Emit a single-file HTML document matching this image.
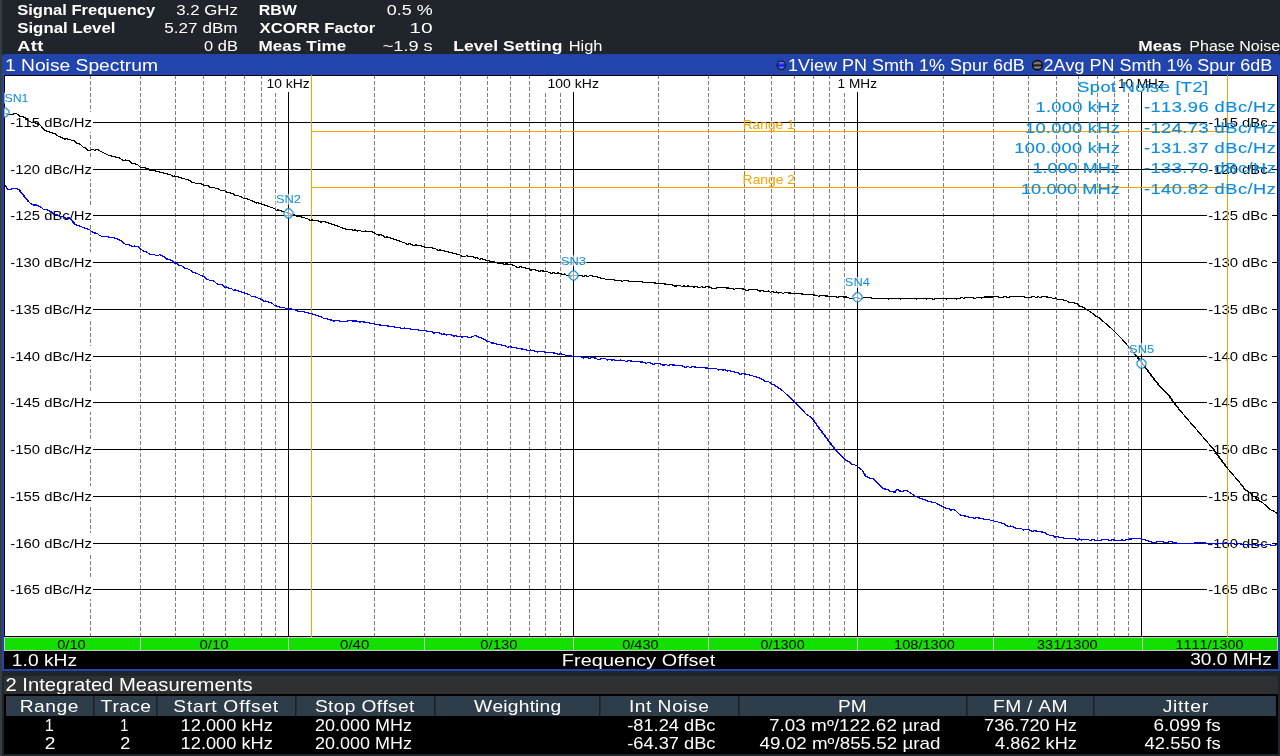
<!DOCTYPE html>
<html><head><meta charset="utf-8"><style>
html,body{margin:0;padding:0;background:#1f252b;overflow:hidden;}
svg{display:block;will-change:transform;font-family:"Liberation Sans",sans-serif;}
text{font-kerning:none;}
</style></head><body>
<svg width="1280" height="756" viewBox="0 0 1280 756">
<rect x="0" y="0" width="1280" height="756" fill="#1f252b"/>
<rect x="0" y="0" width="2" height="756" fill="#343f45"/>
<text transform="scale(1.0889,1)" x="15.82 25.95 30.18 39.46 48.75 57.20 61.42 65.65 74.93 80.85 89.30 98.59 107.87 116.32 125.61 134.06" y="15.00" font-size="15.2" font-weight="bold" fill="#fff">Signal Frequency</text>
<text transform="scale(1.1081,1)" x="158.97 167.43 171.65 180.10 184.33 196.15 207.13" y="15.00" font-size="15.2" font-weight="normal" fill="#fff">3.2 GHz</text>
<text transform="scale(1.0548,1)" x="245.20 256.18 267.15" y="15.00" font-size="15.2" font-weight="bold" fill="#fff">RBW</text>
<text transform="scale(1.1793,1)" x="327.98 336.43 340.66 349.11 353.33" y="15.00" font-size="15.2" font-weight="normal" fill="#fff">0.5 %</text>
<text transform="scale(1.1074,1)" x="15.55 25.68 29.91 39.19 48.48 56.93 61.15 65.38 74.66 83.11 91.57 100.02" y="33.00" font-size="15.2" font-weight="bold" fill="#fff">Signal Level</text>
<text transform="scale(1.1269,1)" x="145.81 154.27 158.49 166.94 175.40 179.62 188.07 198.21" y="33.00" font-size="15.2" font-weight="normal" fill="#fff">5.27 dBm</text>
<text transform="scale(1.0960,1)" x="236.83 246.97 257.94 269.77 280.74 291.72 295.94 305.23 313.68 322.14 327.20 336.48" y="33.00" font-size="15.2" font-weight="bold" fill="#fff">XCORR Factor</text>
<text transform="scale(1.3856,1)" x="295.46 303.91" y="33.00" font-size="15.2" font-weight="normal" fill="#fff">10</text>
<text transform="scale(1.2000,1)" x="14.37 25.68 30.96" y="51.00" font-size="15.2" font-weight="bold" fill="#fff">Att</text>
<text transform="scale(1.0812,1)" x="188.73 197.18 201.40 209.86" y="51.00" font-size="15.2" font-weight="normal" fill="#fff">0 dB</text>
<text transform="scale(1.1275,1)" x="229.31 241.98 250.43 258.88 267.34 271.56 280.84 285.07 298.58" y="51.00" font-size="15.2" font-weight="bold" fill="#fff">Meas Time</text>
<text transform="scale(1.1922,1)" x="321.08 329.96 338.41 342.63 351.09 355.31" y="51.00" font-size="15.2" font-weight="normal" fill="#fff">~1.9 s</text>
<text transform="scale(1.1527,1)" x="393.28 402.56 411.01 419.47 427.92 432.14 436.37 446.51 454.96 460.02 465.08 469.31 478.59" y="51.00" font-size="15.2" font-weight="bold" fill="#fff">Level Setting</text>
<text transform="scale(1.0818,1)" x="525.68 536.65 540.03 548.48" y="51.00" font-size="15.2" font-weight="normal" fill="#fff">High</text>
<text transform="scale(1.1434,1)" x="995.47 1008.13 1016.58 1025.03" y="51.00" font-size="15.2" font-weight="bold" fill="#fff">Meas</text>
<text transform="scale(1.0539,1)" x="1128.49 1138.63 1147.08 1155.54 1163.14 1171.59 1175.81 1186.79 1195.24 1198.62 1206.22" y="51.00" font-size="15.2" font-weight="normal" fill="#fff">Phase Noise</text>
<path d="M2 57 Q2 54 5 54 L1277 54 Q1280 54 1280 57 L1280 671 L2 671 Z" fill="#2145ad"/>
<text transform="scale(1.1327,1)" x="4.36 13.81 18.53 30.81 40.26 44.04 52.54 62.00 66.72 78.06 87.51 96.97 105.47 110.19 115.85 125.31" y="70.60" font-size="17" font-weight="normal" fill="#fff">1 Noise Spectrum</text>
<text transform="scale(1.0580,1)" x="744.76 754.22 765.56 769.33 778.79 791.06 795.79 807.13 819.40 824.13 835.46 849.63 854.35 863.80 868.53 877.98 893.10 897.82 909.16 918.61 928.07 933.73 938.45 947.91 957.36" y="70.80" font-size="17" font-weight="normal" fill="#fff">1View PN Smth 1% Spur 6dB</text>
<text transform="scale(1.0572,1)" x="987.08 996.54 1007.88 1016.38 1025.83 1030.55 1041.89 1054.17 1058.89 1070.23 1084.39 1089.12 1098.57 1103.29 1112.75 1127.86 1132.59 1143.93 1153.38 1162.83 1168.50 1173.22 1182.67 1192.13" y="70.80" font-size="17" font-weight="normal" fill="#fff">2Avg PN Smth 1% Spur 6dB</text>
<defs><linearGradient id="gb" x1="0" y1="0" x2="0" y2="1"><stop offset="0" stop-color="#9aa8ff"/><stop offset="0.5" stop-color="#0a14ff"/><stop offset="1" stop-color="#9aa8ff"/></linearGradient><linearGradient id="gk" x1="0" y1="0" x2="0" y2="1"><stop offset="0" stop-color="#222"/><stop offset="0.3" stop-color="#888"/><stop offset="0.5" stop-color="#111"/><stop offset="0.75" stop-color="#888"/><stop offset="1" stop-color="#222"/></linearGradient></defs>
<circle cx="781.4" cy="65.3" r="4.1" fill="url(#gb)" stroke="#1a1a1a" stroke-width="1.3"/>
<circle cx="1037.4" cy="65.2" r="4.8" fill="url(#gk)" stroke="#0a0a0a" stroke-width="1.4"/>
<rect x="4" y="75" width="1274" height="562" fill="#000"/>
<rect x="5" y="76" width="1272" height="560" fill="#fff"/>
<g clip-path="url(#pc)">
<clipPath id="pc"><rect x="5" y="76" width="1272" height="560"/></clipPath>
<line x1="90.5" y1="76" x2="90.5" y2="636" stroke="#808080" stroke-width="1" stroke-dasharray="4 2" stroke-dashoffset="1"/>
<line x1="140.5" y1="76" x2="140.5" y2="636" stroke="#808080" stroke-width="1" stroke-dasharray="4 2" stroke-dashoffset="1"/>
<line x1="175.5" y1="76" x2="175.5" y2="636" stroke="#808080" stroke-width="1" stroke-dasharray="4 2" stroke-dashoffset="1"/>
<line x1="203.5" y1="76" x2="203.5" y2="636" stroke="#808080" stroke-width="1" stroke-dasharray="4 2" stroke-dashoffset="1"/>
<line x1="225.5" y1="76" x2="225.5" y2="636" stroke="#808080" stroke-width="1" stroke-dasharray="4 2" stroke-dashoffset="1"/>
<line x1="244.5" y1="76" x2="244.5" y2="636" stroke="#808080" stroke-width="1" stroke-dasharray="4 2" stroke-dashoffset="1"/>
<line x1="261.5" y1="76" x2="261.5" y2="636" stroke="#808080" stroke-width="1" stroke-dasharray="4 2" stroke-dashoffset="1"/>
<line x1="275.5" y1="76" x2="275.5" y2="636" stroke="#808080" stroke-width="1" stroke-dasharray="4 2" stroke-dashoffset="1"/>
<line x1="374.5" y1="76" x2="374.5" y2="636" stroke="#808080" stroke-width="1" stroke-dasharray="4 2" stroke-dashoffset="1"/>
<line x1="424.5" y1="76" x2="424.5" y2="636" stroke="#808080" stroke-width="1" stroke-dasharray="4 2" stroke-dashoffset="1"/>
<line x1="460.5" y1="76" x2="460.5" y2="636" stroke="#808080" stroke-width="1" stroke-dasharray="4 2" stroke-dashoffset="1"/>
<line x1="487.5" y1="76" x2="487.5" y2="636" stroke="#808080" stroke-width="1" stroke-dasharray="4 2" stroke-dashoffset="1"/>
<line x1="510.5" y1="76" x2="510.5" y2="636" stroke="#808080" stroke-width="1" stroke-dasharray="4 2" stroke-dashoffset="1"/>
<line x1="529.5" y1="76" x2="529.5" y2="636" stroke="#808080" stroke-width="1" stroke-dasharray="4 2" stroke-dashoffset="1"/>
<line x1="545.5" y1="76" x2="545.5" y2="636" stroke="#808080" stroke-width="1" stroke-dasharray="4 2" stroke-dashoffset="1"/>
<line x1="560.5" y1="76" x2="560.5" y2="636" stroke="#808080" stroke-width="1" stroke-dasharray="4 2" stroke-dashoffset="1"/>
<line x1="658.5" y1="76" x2="658.5" y2="636" stroke="#808080" stroke-width="1" stroke-dasharray="4 2" stroke-dashoffset="1"/>
<line x1="708.5" y1="76" x2="708.5" y2="636" stroke="#808080" stroke-width="1" stroke-dasharray="4 2" stroke-dashoffset="1"/>
<line x1="744.5" y1="76" x2="744.5" y2="636" stroke="#808080" stroke-width="1" stroke-dasharray="4 2" stroke-dashoffset="1"/>
<line x1="771.5" y1="76" x2="771.5" y2="636" stroke="#808080" stroke-width="1" stroke-dasharray="4 2" stroke-dashoffset="1"/>
<line x1="794.5" y1="76" x2="794.5" y2="636" stroke="#808080" stroke-width="1" stroke-dasharray="4 2" stroke-dashoffset="1"/>
<line x1="813.5" y1="76" x2="813.5" y2="636" stroke="#808080" stroke-width="1" stroke-dasharray="4 2" stroke-dashoffset="1"/>
<line x1="829.5" y1="76" x2="829.5" y2="636" stroke="#808080" stroke-width="1" stroke-dasharray="4 2" stroke-dashoffset="1"/>
<line x1="844.5" y1="76" x2="844.5" y2="636" stroke="#808080" stroke-width="1" stroke-dasharray="4 2" stroke-dashoffset="1"/>
<line x1="943.5" y1="76" x2="943.5" y2="636" stroke="#808080" stroke-width="1" stroke-dasharray="4 2" stroke-dashoffset="1"/>
<line x1="993.5" y1="76" x2="993.5" y2="636" stroke="#808080" stroke-width="1" stroke-dasharray="4 2" stroke-dashoffset="1"/>
<line x1="1028.5" y1="76" x2="1028.5" y2="636" stroke="#808080" stroke-width="1" stroke-dasharray="4 2" stroke-dashoffset="1"/>
<line x1="1056.5" y1="76" x2="1056.5" y2="636" stroke="#808080" stroke-width="1" stroke-dasharray="4 2" stroke-dashoffset="1"/>
<line x1="1078.5" y1="76" x2="1078.5" y2="636" stroke="#808080" stroke-width="1" stroke-dasharray="4 2" stroke-dashoffset="1"/>
<line x1="1097.5" y1="76" x2="1097.5" y2="636" stroke="#808080" stroke-width="1" stroke-dasharray="4 2" stroke-dashoffset="1"/>
<line x1="1114.5" y1="76" x2="1114.5" y2="636" stroke="#808080" stroke-width="1" stroke-dasharray="4 2" stroke-dashoffset="1"/>
<line x1="1128.5" y1="76" x2="1128.5" y2="636" stroke="#808080" stroke-width="1" stroke-dasharray="4 2" stroke-dashoffset="1"/>
<line x1="1227.5" y1="76" x2="1227.5" y2="636" stroke="#808080" stroke-width="1" stroke-dasharray="4 2" stroke-dashoffset="1"/>
<rect x="93" y="122" width="1114" height="1" fill="#000"/>
<rect x="1272" y="122" width="5" height="1" fill="#000"/>
<rect x="93" y="169" width="1114" height="1" fill="#000"/>
<rect x="1272" y="169" width="5" height="1" fill="#000"/>
<rect x="93" y="215" width="1114" height="1" fill="#000"/>
<rect x="1272" y="215" width="5" height="1" fill="#000"/>
<rect x="93" y="262" width="1114" height="1" fill="#000"/>
<rect x="1272" y="262" width="5" height="1" fill="#000"/>
<rect x="93" y="309" width="1114" height="1" fill="#000"/>
<rect x="1272" y="309" width="5" height="1" fill="#000"/>
<rect x="93" y="356" width="1114" height="1" fill="#000"/>
<rect x="1272" y="356" width="5" height="1" fill="#000"/>
<rect x="93" y="402" width="1114" height="1" fill="#000"/>
<rect x="1272" y="402" width="5" height="1" fill="#000"/>
<rect x="93" y="449" width="1114" height="1" fill="#000"/>
<rect x="1272" y="449" width="5" height="1" fill="#000"/>
<rect x="93" y="496" width="1114" height="1" fill="#000"/>
<rect x="1272" y="496" width="5" height="1" fill="#000"/>
<rect x="93" y="543" width="1114" height="1" fill="#000"/>
<rect x="1272" y="543" width="5" height="1" fill="#000"/>
<rect x="93" y="589" width="1114" height="1" fill="#000"/>
<rect x="1272" y="589" width="5" height="1" fill="#000"/>
<rect x="288" y="91" width="1" height="545" fill="#000"/>
<rect x="573" y="91" width="1" height="545" fill="#000"/>
<rect x="857" y="91" width="1" height="545" fill="#000"/>
<rect x="1141" y="91" width="1" height="545" fill="#000"/>
<rect x="263.6" y="76" width="49.39999999999998" height="16" fill="#fff"/>
<rect x="544.6" y="76" width="57.60000000000002" height="16" fill="#fff"/>
<rect x="834.6" y="76" width="45.69999999999993" height="16" fill="#fff"/>
<rect x="1115" y="76" width="53" height="16" fill="#fff"/>
<rect x="5" y="112" width="88" height="20" fill="#fff"/>
<rect x="1207" y="112" width="65" height="20" fill="#fff"/>
<rect x="5" y="159" width="88" height="20" fill="#fff"/>
<rect x="1207" y="159" width="65" height="20" fill="#fff"/>
<rect x="5" y="205" width="88" height="20" fill="#fff"/>
<rect x="1207" y="205" width="65" height="20" fill="#fff"/>
<rect x="5" y="252" width="88" height="20" fill="#fff"/>
<rect x="1207" y="252" width="65" height="20" fill="#fff"/>
<rect x="5" y="299" width="88" height="20" fill="#fff"/>
<rect x="1207" y="299" width="65" height="20" fill="#fff"/>
<rect x="5" y="346" width="88" height="20" fill="#fff"/>
<rect x="1207" y="346" width="65" height="20" fill="#fff"/>
<rect x="5" y="392" width="88" height="20" fill="#fff"/>
<rect x="1207" y="392" width="65" height="20" fill="#fff"/>
<rect x="5" y="439" width="88" height="20" fill="#fff"/>
<rect x="1207" y="439" width="65" height="20" fill="#fff"/>
<rect x="5" y="486" width="88" height="20" fill="#fff"/>
<rect x="1207" y="486" width="65" height="20" fill="#fff"/>
<rect x="5" y="533" width="88" height="20" fill="#fff"/>
<rect x="1207" y="533" width="65" height="20" fill="#fff"/>
<rect x="5" y="579" width="88" height="20" fill="#fff"/>
<rect x="1207" y="579" width="65" height="20" fill="#fff"/>
<text transform="scale(1.1414,1)" x="9.06 13.39 20.62 27.85 35.08 38.69 45.92 54.59 61.09 64.70 74.09" y="126.90" font-size="13" font-weight="normal" fill="#000">-115 dBc/Hz</text>
<text transform="scale(1.1387,1)" x="1061.17 1065.50 1072.73 1079.96 1087.19 1090.80 1098.03 1106.70" y="126.90" font-size="13" font-weight="normal" fill="#000">-115 dBc</text>
<text transform="scale(1.1414,1)" x="9.06 13.39 20.62 27.85 35.08 38.69 45.92 54.59 61.09 64.70 74.09" y="173.90" font-size="13" font-weight="normal" fill="#000">-120 dBc/Hz</text>
<text transform="scale(1.1387,1)" x="1061.17 1065.50 1072.73 1079.96 1087.19 1090.80 1098.03 1106.70" y="173.90" font-size="13" font-weight="normal" fill="#000">-120 dBc</text>
<text transform="scale(1.1414,1)" x="9.06 13.39 20.62 27.85 35.08 38.69 45.92 54.59 61.09 64.70 74.09" y="219.90" font-size="13" font-weight="normal" fill="#000">-125 dBc/Hz</text>
<text transform="scale(1.1387,1)" x="1061.17 1065.50 1072.73 1079.96 1087.19 1090.80 1098.03 1106.70" y="219.90" font-size="13" font-weight="normal" fill="#000">-125 dBc</text>
<text transform="scale(1.1414,1)" x="9.06 13.39 20.62 27.85 35.08 38.69 45.92 54.59 61.09 64.70 74.09" y="266.90" font-size="13" font-weight="normal" fill="#000">-130 dBc/Hz</text>
<text transform="scale(1.1387,1)" x="1061.17 1065.50 1072.73 1079.96 1087.19 1090.80 1098.03 1106.70" y="266.90" font-size="13" font-weight="normal" fill="#000">-130 dBc</text>
<text transform="scale(1.1414,1)" x="9.06 13.39 20.62 27.85 35.08 38.69 45.92 54.59 61.09 64.70 74.09" y="313.90" font-size="13" font-weight="normal" fill="#000">-135 dBc/Hz</text>
<text transform="scale(1.1387,1)" x="1061.17 1065.50 1072.73 1079.96 1087.19 1090.80 1098.03 1106.70" y="313.90" font-size="13" font-weight="normal" fill="#000">-135 dBc</text>
<text transform="scale(1.1414,1)" x="9.06 13.39 20.62 27.85 35.08 38.69 45.92 54.59 61.09 64.70 74.09" y="360.90" font-size="13" font-weight="normal" fill="#000">-140 dBc/Hz</text>
<text transform="scale(1.1387,1)" x="1061.17 1065.50 1072.73 1079.96 1087.19 1090.80 1098.03 1106.70" y="360.90" font-size="13" font-weight="normal" fill="#000">-140 dBc</text>
<text transform="scale(1.1414,1)" x="9.06 13.39 20.62 27.85 35.08 38.69 45.92 54.59 61.09 64.70 74.09" y="406.90" font-size="13" font-weight="normal" fill="#000">-145 dBc/Hz</text>
<text transform="scale(1.1387,1)" x="1061.17 1065.50 1072.73 1079.96 1087.19 1090.80 1098.03 1106.70" y="406.90" font-size="13" font-weight="normal" fill="#000">-145 dBc</text>
<text transform="scale(1.1414,1)" x="9.06 13.39 20.62 27.85 35.08 38.69 45.92 54.59 61.09 64.70 74.09" y="453.90" font-size="13" font-weight="normal" fill="#000">-150 dBc/Hz</text>
<text transform="scale(1.1387,1)" x="1061.17 1065.50 1072.73 1079.96 1087.19 1090.80 1098.03 1106.70" y="453.90" font-size="13" font-weight="normal" fill="#000">-150 dBc</text>
<text transform="scale(1.1414,1)" x="9.06 13.39 20.62 27.85 35.08 38.69 45.92 54.59 61.09 64.70 74.09" y="500.90" font-size="13" font-weight="normal" fill="#000">-155 dBc/Hz</text>
<text transform="scale(1.1387,1)" x="1061.17 1065.50 1072.73 1079.96 1087.19 1090.80 1098.03 1106.70" y="500.90" font-size="13" font-weight="normal" fill="#000">-155 dBc</text>
<text transform="scale(1.1414,1)" x="9.06 13.39 20.62 27.85 35.08 38.69 45.92 54.59 61.09 64.70 74.09" y="547.90" font-size="13" font-weight="normal" fill="#000">-160 dBc/Hz</text>
<text transform="scale(1.1387,1)" x="1061.17 1065.50 1072.73 1079.96 1087.19 1090.80 1098.03 1106.70" y="547.90" font-size="13" font-weight="normal" fill="#000">-160 dBc</text>
<text transform="scale(1.1414,1)" x="9.06 13.39 20.62 27.85 35.08 38.69 45.92 54.59 61.09 64.70 74.09" y="593.90" font-size="13" font-weight="normal" fill="#000">-165 dBc/Hz</text>
<text transform="scale(1.1387,1)" x="1061.17 1065.50 1072.73 1079.96 1087.19 1090.80 1098.03 1106.70" y="593.90" font-size="13" font-weight="normal" fill="#000">-165 dBc</text>
<text transform="scale(1.0664,1)" x="249.95 257.18 264.41 268.02 274.52 283.91" y="88.00" font-size="13" font-weight="normal" fill="#000">10 kHz</text>
<text transform="scale(1.0770,1)" x="508.37 515.60 522.83 530.06 533.67 540.17 549.56" y="88.00" font-size="13" font-weight="normal" fill="#000">100 kHz</text>
<text transform="scale(1.0495,1)" x="798.05 805.28 808.89 819.72 829.11" y="88.00" font-size="13" font-weight="normal" fill="#000">1 MHz</text>
<text transform="scale(1.0428,1)" x="1072.04 1079.27 1086.50 1090.11 1100.94 1110.33" y="88.00" font-size="13" font-weight="normal" fill="#000">10 MHz</text>
<rect x="311" y="75" width="1" height="562" fill="#f5a300"/>
<rect x="1227" y="75" width="1" height="562" fill="#f5a300"/>
<rect x="311" y="131" width="916" height="1" fill="#f5a300"/>
<rect x="311" y="187" width="916" height="1" fill="#f5a300"/>
<text transform="scale(1.0580,1)" x="701.97 711.36 718.59 725.82 733.05 740.28 743.89" y="128.80" font-size="13" font-weight="normal" fill="#f5a300">Range 1</text>
<text transform="scale(1.0668,1)" x="696.13 705.52 712.75 719.98 727.21 734.44 738.05" y="184.40" font-size="13" font-weight="normal" fill="#f5a300">Range 2</text>
<polyline points="5.0,185.0 7.5,189.4" fill="none" stroke="#0000f5" stroke-width="1.6" shape-rendering="crispEdges"/>
<polyline points="7.5,189.4 10.0,189.97 12.5,188.53 15.0,188.1 18.75,189.4" fill="none" stroke="#0000f5" stroke-width="1.2" shape-rendering="crispEdges"/>
<polyline points="18.75,189.4 20.75,191.9 22.75,194.4 24.75,196.9 26.75,199.4 28.75,201.9" fill="none" stroke="#0000f5" stroke-width="1.6" shape-rendering="crispEdges"/>
<polyline points="28.75,201.9 31.25,203.93 33.75,204.97 36.25,205.0 38.54,206.04 40.83,207.08 43.12,209.12 45.42,209.17 47.71,210.21 50.0,211.25 52.0,212.25 54.0,214.25 56.0,214.25 58.0,215.25 60.0,216.25 62.0,216.62 64.0,216.99 66.0,218.36 68.0,217.73 70.0,218.1" fill="none" stroke="#0000f5" stroke-width="1.2" shape-rendering="crispEdges"/>
<polyline points="70.0,218.1 72.5,221.25 75.0,224.4" fill="none" stroke="#0000f5" stroke-width="1.6" shape-rendering="crispEdges"/>
<polyline points="75.0,224.4 77.14,225.2 79.29,226.0 81.43,226.8 83.57,227.6 85.71,228.4 87.86,229.2 90.0,230.0 92.29,232.04 94.58,233.08 96.88,233.12 99.17,235.17 101.46,236.21 103.75,236.25 105.89,236.61 108.04,236.96 110.18,237.32 112.32,237.68 114.46,238.04 116.61,238.39 118.75,239.75 121.25,240.63 123.75,243.52 126.25,244.4 128.33,244.82 130.42,245.23 132.5,246.65 134.58,246.07 136.67,246.48 138.75,246.9 141.0,249.4 143.25,250.9 145.5,251.4 147.75,252.9 150.0,254.4 152.0,254.44 154.0,254.48 156.0,255.52 158.0,255.56 160.0,254.6 162.14,255.73 164.29,256.86 166.43,258.99 168.57,259.11 170.71,260.24 172.86,261.37 175.0,263.5 177.08,263.54 179.17,265.58 181.25,265.62 183.33,266.67 185.42,268.71 187.5,268.75 189.58,269.79 191.67,270.83 193.75,272.88 195.83,272.92 197.92,273.96 200.0,275.0 202.08,275.94 204.17,276.88 206.25,278.81 208.33,279.75 210.42,280.69 212.5,280.62 214.58,281.56 216.67,283.5 218.75,284.44 220.83,284.38 222.92,285.31 225.0,287.25 227.08,286.98 229.17,288.71 231.25,288.44 233.33,290.17 235.42,289.9 237.5,290.62 239.58,291.35 241.67,292.08 243.75,292.81 245.83,293.54 247.92,294.27 250.0,295.0 252.0,296.75 254.0,296.5 256.0,297.25 258.0,298.0 260.0,298.75 262.0,299.5 264.0,301.25 266.0,301.0 268.0,301.75 270.0,302.5 272.0,303.25 274.0,305.0 276.0,305.75 278.0,306.5 280.0,307.25 282.0,307.75 284.0,307.25 286.0,308.75 288.0,309.25 290.0,308.75 292.0,309.2 294.0,309.66 296.0,310.11 298.0,311.57 300.0,311.02 302.0,311.48 304.0,311.93 306.0,312.39 308.0,312.84 310.0,313.3 312.0,313.75 314.0,314.44 316.0,315.14 318.0,315.83 320.0,316.53 322.0,317.22 324.0,318.92 326.0,318.61 328.0,319.31 330.0,320.0 332.0,320.08 334.0,321.17 336.0,320.25 338.0,320.33 340.0,321.42 342.0,321.5 344.0,321.58 346.0,321.67 348.0,320.75 350.0,320.83 352.0,320.92 354.0,321.0 356.0,321.08 358.0,321.17 360.0,322.25 362.0,321.62 364.0,322.0 366.0,322.38 368.0,322.75 370.0,323.12 372.0,323.5 374.0,323.88 376.0,324.25 378.0,324.62 380.0,325.0 382.0,325.25 384.0,325.5 386.0,325.75 388.0,326.0 390.0,326.25 392.0,326.5 394.0,326.75 396.0,328.0 398.0,327.25 400.0,327.5 402.0,328.75 404.0,328.0 406.0,328.25 408.0,328.5 410.0,328.75 412.0,330.0 414.0,329.25 416.0,329.5 418.0,329.75 420.0,331.0 422.0,330.31 424.0,330.62 426.0,330.94 428.0,331.25 430.0,331.56 432.0,331.88 434.0,333.19 436.0,332.5 438.0,332.81 440.0,333.12 442.0,334.44 444.0,333.75 446.0,335.06 448.0,334.38 450.0,334.69 452.0,335.0 454.0,336.31 456.0,335.62 458.0,336.94 460.0,336.25 462.0,337.25 464.0,336.25 466.0,336.25 468.0,337.25 470.0,337.25 472.5,336.88 475.0,335.5 477.0,336.3 479.0,337.1 481.0,337.9 483.0,338.7 485.0,339.5 487.0,341.35 489.0,341.2 491.0,343.05 493.0,342.9 495.0,343.75 497.08,344.17 499.17,344.58 501.25,345.0 503.33,345.42 505.42,345.83 507.5,347.25 509.58,346.67 511.67,347.08 513.75,347.5 515.83,347.92 517.92,348.33 520.0,348.75 522.0,349.0 524.0,349.25 526.0,349.5 528.0,350.75 530.0,350.0 532.0,350.25 534.0,350.5 536.0,351.75 538.0,352.0 540.0,351.25 542.0,351.5 544.0,351.75 546.0,353.0 548.0,352.25 550.0,352.5 552.0,352.75 554.0,353.0 556.0,353.25 558.0,354.5 560.0,353.75 562.17,354.17 564.33,354.58 566.5,356.0 568.67,355.42 570.83,355.83 573.0,356.25 575.04,356.41 577.09,356.58 579.13,356.74 581.17,356.9 583.22,358.07 585.26,357.23 587.3,357.39 589.35,358.55 591.39,357.72 593.43,357.88 595.48,358.04 597.52,359.21 599.57,359.37 601.61,358.53 603.65,358.7 605.7,358.86 607.74,360.02 609.78,359.18 611.83,360.35 613.87,359.51 615.91,360.67 617.96,360.84 620.0,360.0 622.0,360.19 624.0,360.38 626.0,361.56 628.0,360.75 630.0,360.94 632.0,361.12 634.0,361.31 636.0,361.5 638.0,361.69 640.0,361.88 642.0,362.06 644.0,362.25 646.0,363.44 648.0,362.62 650.0,362.81 652.0,364.0 654.0,364.19 656.0,363.38 658.0,363.56 660.0,363.75 662.0,364.94 664.0,365.12 666.0,364.31 668.0,365.5 670.0,364.69 672.0,364.88 674.0,365.06 676.0,365.25 678.0,365.44 680.0,365.62 682.0,365.81 684.0,367.0 686.0,367.19 688.0,366.38 690.0,367.56 692.0,366.75 694.0,366.94 696.0,367.12 698.0,367.31 700.0,367.5 702.08,367.67 704.17,367.83 706.25,368.0 708.33,368.17 710.42,368.33 712.5,368.5 714.58,368.67 716.67,368.83 718.75,370.0 720.83,369.17 722.92,370.33 725.0,369.5 727.14,371.04 729.29,370.59 731.43,371.13 733.57,371.67 735.71,372.21 737.86,372.76 740.0,374.3 742.47,373.67 744.93,374.03 747.4,374.4 749.62,375.04 751.84,375.68 754.06,376.32 756.28,376.96 758.5,377.6 760.67,378.52 762.83,379.43 765.0,381.35 767.17,381.27 769.33,382.18 771.5,384.1 773.72,384.6 775.94,386.1 778.16,387.6 780.38,389.1 782.6,390.6 784.6,392.53 786.6,394.47 788.6,396.4 790.6,398.33 792.6,400.27 794.6,402.2 796.62,404.27 798.63,406.33 800.65,408.4 802.67,410.47 804.68,412.53 806.7,414.6 809.0,416.0 811.3,417.4" fill="none" stroke="#0000f5" stroke-width="1.2" shape-rendering="crispEdges"/>
<polyline points="811.3,417.4 813.34,420.18 815.38,422.96 817.42,425.74 819.46,428.52 821.5,431.3 823.82,434.38 826.13,437.47 828.45,440.55 830.77,443.63 833.08,446.72 835.4,449.8" fill="none" stroke="#0000f5" stroke-width="1.6" shape-rendering="crispEdges"/>
<polyline points="835.4,449.8 837.44,451.84 839.48,453.88 841.52,455.92 843.56,457.96 845.6,460.0 847.82,461.18 850.04,462.36 852.26,464.54 854.48,464.72 856.7,465.9 859.45,468.05 862.2,470.2" fill="none" stroke="#0000f5" stroke-width="1.2" shape-rendering="crispEdges"/>
<polyline points="862.2,470.2 866.0,476.7" fill="none" stroke="#0000f5" stroke-width="1.6" shape-rendering="crispEdges"/>
<polyline points="866.0,476.7 868.43,477.3 870.87,478.9 873.3,478.5 875.34,480.54 877.38,482.58 879.42,484.62 881.46,486.66 883.5,488.7 885.8,489.15 888.1,489.6 890.27,491.53 892.43,491.47 894.6,492.4" fill="none" stroke="#0000f5" stroke-width="1.2" shape-rendering="crispEdges"/>
<polyline points="894.6,492.4 897.4,488.7" fill="none" stroke="#0000f5" stroke-width="1.6" shape-rendering="crispEdges"/>
<polyline points="897.4,488.7 899.7,490.98 902.0,491.25 904.5,490.88 907.0,490.5 909.0,491.94 911.0,493.38 913.0,494.81 915.0,496.25 917.0,497.0 919.0,497.75 921.0,498.5 923.0,499.25 925.0,500.0 927.0,500.5 929.0,502.0 931.0,501.5 933.0,503.0 935.0,502.5 937.0,503.6 939.0,504.7 941.0,505.8 943.0,506.9 945.0,508.0 947.0,508.4 949.0,508.8 951.0,510.2 953.0,509.6 955.0,510.0 957.5,512.5 960.0,515.0 962.0,515.4 964.0,515.8 966.0,516.2 968.0,516.6 970.0,518.0 972.14,517.25 974.29,518.5 976.43,517.75 978.57,518.0 980.71,518.25 982.86,518.5 985.0,519.75 987.14,519.29 989.29,519.82 991.43,520.36 993.57,520.89 995.71,521.43 997.86,521.96 1000.0,522.5 1002.14,523.21 1004.29,523.93 1006.43,525.64 1008.57,526.36 1010.71,526.07 1012.86,526.79 1015.0,527.5 1017.14,528.86 1019.29,528.21 1021.43,528.57 1023.57,529.93 1025.71,529.29 1027.86,529.64 1030.0,530.0 1032.14,531.36 1034.29,530.71 1036.43,531.07 1038.57,531.43 1040.71,531.79 1042.86,532.14 1045.0,532.5 1047.0,534.25 1049.0,535.0 1051.0,535.75 1053.0,535.5 1055.0,537.25 1057.0,536.65 1059.0,537.05 1061.0,537.45 1063.0,537.85 1065.0,538.25 1067.08,538.36 1069.17,538.48 1071.25,538.59 1073.33,538.7 1075.42,538.81 1077.5,539.92 1079.58,539.04 1081.67,540.15 1083.75,539.26 1085.83,539.38 1087.92,539.49 1090.0,540.6 1092.0,539.63 1094.0,539.65 1096.0,540.68 1098.0,540.71 1100.0,540.73 1102.0,539.76 1104.0,539.79 1106.0,539.81 1108.0,539.84 1110.0,540.87 1112.0,539.89 1114.0,539.92 1116.0,540.95 1118.0,539.97 1120.0,541.0 1122.14,539.8 1124.29,540.6 1126.43,539.4 1128.57,539.2 1130.71,539.0 1132.86,538.8 1135.0,538.6 1137.5,538.6 1140.0,538.6 1142.0,539.14 1144.0,539.68 1146.0,540.22 1148.0,540.76 1150.0,541.3 1152.0,542.3 1154.0,542.3 1156.0,542.3 1158.0,541.3 1160.0,541.3 1162.0,541.3 1164.0,542.3 1166.0,542.3 1168.0,542.3 1170.0,541.3 1172.0,541.72 1174.0,543.14 1176.0,542.56 1178.0,543.98 1180.0,543.4 1182.0,543.34 1184.0,543.28 1186.0,543.22 1188.0,543.16 1190.0,543.1 1192.0,544.04 1194.0,542.98 1196.0,542.92 1198.0,542.86 1200.0,542.8 1202.0,542.85 1204.0,542.91 1206.0,542.96 1208.0,544.02 1210.0,544.07 1212.0,543.13 1214.0,543.18 1216.0,544.24 1218.0,543.29 1220.0,543.35 1222.0,543.4 1224.0,543.46 1226.0,543.51 1228.0,543.57 1230.0,543.62 1232.0,543.68 1234.0,543.74 1236.0,544.79 1238.0,543.85 1240.0,543.9 1242.0,543.95 1244.0,545.01 1246.0,544.06 1248.0,545.11 1250.0,544.16 1252.0,544.22 1254.0,544.27 1256.0,545.32 1258.0,545.37 1260.0,544.43 1262.0,544.48 1264.0,545.53 1266.0,544.58 1268.0,544.64 1270.0,544.69 1272.0,545.74 1274.0,545.79 1276.0,544.85 1278,544.9" fill="none" stroke="#0000f5" stroke-width="1.2" shape-rendering="crispEdges"/>
<polyline points="5.0,113.75 7.5,114.08 10.0,114.4 12.5,114.75 15.0,113.1 17.33,114.15 19.67,116.2 22.0,116.25 24.0,117.34 26.0,118.42 28.0,120.51 30.0,121.6 32.0,122.48 34.0,122.36 36.0,123.24 38.0,124.12 40.0,125.0 42.5,127.8 45.0,130.6 47.0,131.23 49.0,131.86 51.0,132.49 53.0,133.12 55.0,133.75 57.0,135.62 59.0,136.49 61.0,137.36 63.0,138.23 65.0,139.1 67.0,138.73 69.0,139.36 71.0,139.99 73.0,140.62 75.0,141.25 77.17,143.61 79.33,143.97 81.5,145.32 83.67,147.68 85.83,148.04 88.0,150.4 90.25,150.4 92.5,149.4 94.75,150.4 97.0,149.4 99.2,150.52 101.4,151.64 103.6,152.76 105.8,153.88 108.0,155.0 110.0,155.52 112.0,156.03 114.0,156.55 116.0,157.07 118.0,157.58 120.0,158.1 122.0,159.73 124.0,160.36 126.0,159.99 128.0,160.62 130.0,161.25 132.0,163.2 134.0,163.15 136.0,164.1 138.0,165.05 140.0,167.0 142.0,167.7 144.0,167.4 146.0,168.1 148.0,168.8 150.0,170.5 152.08,170.04 154.17,170.58 156.25,171.12 158.33,171.67 160.42,172.21 162.5,172.75 164.58,173.29 166.67,173.83 168.75,174.38 170.83,174.92 172.92,176.46 175.0,176.0 177.08,176.62 179.17,177.25 181.25,177.88 183.33,178.5 185.42,179.12 187.5,179.75 189.58,180.38 191.67,182.0 193.75,182.62 195.83,183.25 197.92,183.88 200.0,183.5 202.08,184.12 204.17,185.75 206.25,185.38 208.33,186.0 210.42,187.62 212.5,187.25 214.58,187.88 216.67,188.5 218.75,189.12 220.83,190.75 222.92,190.38 225.0,191.0 227.08,192.75 229.17,192.5 231.25,193.25 233.33,194.0 235.42,195.75 237.5,195.5 239.58,196.25 241.67,197.0 243.75,198.75 245.83,198.5 247.92,199.25 250.0,200.0 252.0,200.7 254.0,201.4 256.0,203.1 258.0,202.8 260.0,203.5 262.0,204.2 264.0,204.9 266.0,205.6 268.0,206.3 270.0,207.0 272.11,207.72 274.22,208.44 276.33,210.17 278.44,209.89 280.56,210.61 282.67,211.33 284.78,212.06 286.89,212.78 289.0,213.5 291.09,214.09 293.18,214.68 295.27,215.27 297.36,216.86 299.45,216.45 301.55,217.05 303.64,217.64 305.73,218.23 307.82,218.82 309.91,220.41 312.0,220.0 314.17,220.29 316.33,220.58 318.5,220.88 320.67,222.17 322.83,221.46 325.0,221.75 327.0,222.45 329.0,223.15 331.0,223.85 333.0,224.55 335.0,225.25 337.0,225.95 339.0,226.65 341.0,227.35 343.0,228.05 345.0,228.75 347.08,229.96 349.17,229.17 351.25,229.38 353.33,230.58 355.42,229.79 357.5,231.0 359.58,230.21 361.67,231.42 363.75,231.62 365.83,230.83 367.92,232.04 370.0,231.25 372.14,231.96 374.29,232.68 376.43,234.39 378.57,235.11 380.71,234.82 382.86,235.54 385.0,237.25 387.0,236.93 389.0,237.6 391.0,238.28 393.0,238.95 395.0,239.62 397.0,240.3 399.0,240.97 401.0,241.65 403.0,242.32 405.0,243.0 407.08,244.38 409.17,243.75 411.25,244.12 413.33,245.5 415.42,244.88 417.5,245.25 419.58,245.62 421.67,246.0 423.75,246.38 425.83,247.75 427.92,247.12 430.0,247.5 432.0,248.0 434.0,248.5 436.0,249.0 438.0,250.5 440.0,250.0 442.0,250.5 444.0,251.0 446.0,251.5 448.0,252.0 450.0,252.5 452.0,253.0 454.0,253.5 456.0,254.0 458.0,254.5 460.0,255.0 462.14,256.29 464.29,256.57 466.43,255.86 468.57,256.14 470.71,256.43 472.86,256.71 475.0,258.0 477.14,257.61 479.29,259.21 481.43,258.82 483.57,259.43 485.71,260.04 487.86,260.64 490.0,261.25 492.0,261.57 494.0,261.9 496.0,262.23 498.0,263.55 500.0,262.88 502.0,263.2 504.0,264.52 506.0,263.85 508.0,264.18 510.0,264.5 512.08,264.96 514.17,265.42 516.25,266.88 518.33,267.33 520.42,266.79 522.5,267.25 524.58,267.71 526.67,268.17 528.75,268.62 530.83,270.08 532.92,269.54 535.0,270.0 537.08,270.27 539.17,271.54 541.25,270.81 543.33,271.08 545.42,271.35 547.5,271.62 549.58,272.9 551.67,273.17 553.75,272.44 555.83,273.71 557.92,272.98 560.0,273.25 562.17,274.62 564.33,274.0 566.5,275.38 568.67,275.75 570.83,276.12 573.0,275.5 575.12,275.5 577.25,275.5 579.38,275.5 581.5,275.5 583.62,276.5 585.75,275.5 587.88,276.5 590.0,275.5 592.0,275.9 594.0,276.3 596.0,276.7 598.0,277.1 600.0,277.5 602.0,278.9 604.0,278.3 606.0,279.7 608.0,279.1 610.0,279.5 612.0,279.65 614.0,279.8 616.0,280.95 618.0,280.1 620.0,280.25 622.0,281.4 624.0,280.55 626.0,280.7 628.0,280.85 630.0,282.0 632.0,281.15 634.0,281.3 636.0,281.45 638.0,281.6 640.0,281.75 642.0,281.9 644.0,283.05 646.0,282.2 648.0,282.35 650.0,282.5 652.0,282.7 654.0,282.9 656.0,283.1 658.0,283.3 660.0,283.5 662.0,283.7 664.0,283.9 666.0,284.1 668.0,284.3 670.0,284.5 672.0,284.7 674.0,285.9 676.0,286.1 678.0,285.3 680.0,285.5 682.0,286.6 684.0,285.7 686.0,286.8 688.0,285.9 690.0,287.0 692.0,286.1 694.0,287.2 696.0,286.3 698.0,287.4 700.0,287.5 702.0,286.6 704.0,287.7 706.0,286.8 708.0,286.9 710.0,287.0 712.0,288.1 714.0,288.2 716.0,288.3 718.0,287.4 720.0,287.5 722.0,287.63 724.0,287.76 726.0,287.89 728.0,288.02 730.0,288.15 732.0,288.28 734.0,289.41 736.0,288.54 738.0,288.67 740.0,288.8 742.0,288.93 744.0,289.06 746.0,290.19 748.0,290.32 750.0,289.45 752.0,289.58 754.0,289.71 756.0,289.84 758.0,289.97 760.0,291.1 762.08,290.32 764.17,291.54 766.25,291.77 768.33,290.99 770.42,292.21 772.5,291.43 774.58,292.66 776.67,291.88 778.75,293.1 780.86,292.28 782.97,293.45 785.08,292.62 787.19,292.8 789.3,292.98 791.41,293.15 793.52,293.32 795.62,293.5 797.73,293.68 799.84,293.85 801.95,294.02 804.06,294.2 806.17,294.38 808.28,294.55 810.39,294.72 812.5,294.9 814.61,295.07 816.73,295.24 818.84,296.41 820.95,295.57 823.06,295.74 825.17,295.91 827.29,296.08 829.4,296.25 831.41,296.35 833.41,296.44 835.42,296.54 837.43,297.64 839.44,296.73 841.44,296.83 843.45,296.93 845.46,297.02 847.46,297.12 849.47,298.21 851.48,298.31 853.49,298.41 855.49,297.5 857.5,297.6 859.55,298.65 861.59,298.69 863.64,297.74 865.68,297.78 867.73,297.83 869.77,297.87 871.82,297.92 873.86,298.96 875.91,298.01 877.95,299.05 880.0,298.1 882.01,298.1 884.03,298.1 886.04,298.1 888.06,299.1 890.08,298.1 892.09,298.1 894.11,298.1 896.12,298.1 898.13,298.1 900.15,299.1 902.16,298.1 904.18,298.1 906.2,298.1 908.21,298.1 910.23,298.1 912.24,298.1 914.25,298.1 916.27,299.1 918.28,298.1 920.3,298.1 922.32,298.1 924.33,298.1 926.35,299.1 928.36,298.1 930.38,298.1 932.39,299.1 934.4,299.1 936.42,298.1 938.44,298.1 940.45,298.1 942.47,298.1 944.48,298.1 946.5,299.1 948.51,298.1 950.52,298.1 952.54,298.1 954.56,298.1 956.57,299.1 958.59,298.1 960.6,298.1 961.6,297.4 963.62,298.37 965.64,297.34 967.66,297.31 969.68,297.27 971.71,297.24 973.73,298.21 975.75,298.18 977.77,297.15 979.79,297.12 981.81,298.08 983.83,297.05 985.85,297.02 987.87,296.99 989.89,296.96 991.92,296.93 993.94,296.89 995.96,296.86 997.98,296.83 1000.0,297.8 1002.02,297.8 1004.04,296.79 1006.05,296.79 1008.07,297.78 1010.09,296.78 1012.11,296.77 1014.13,296.77 1016.15,296.76 1018.16,296.76 1020.18,296.75 1022.2,296.75 1024.22,296.75 1026.24,297.74 1028.25,297.74 1030.27,297.73 1032.29,296.73 1034.31,296.72 1036.33,297.72 1038.35,296.71 1040.36,297.71 1042.38,296.7 1044.4,296.7 1046.64,296.96 1048.88,297.22 1051.12,297.48 1053.36,298.74 1055.6,298.0 1057.82,299.54 1060.04,299.08 1062.26,299.62 1064.48,300.16 1066.7,300.7 1068.92,302.38 1071.14,302.06 1073.36,302.74 1075.58,303.42 1077.8,304.1 1080.1,306.48 1082.4,306.85 1084.7,308.23 1087.0,309.6 1089.22,311.08 1091.44,312.56 1093.66,314.04 1095.88,316.52 1098.1,317.0 1100.27,318.85 1102.43,320.7 1104.6,322.55 1106.77,324.4 1108.93,326.25 1111.1,328.1 1113.32,330.34 1115.54,332.58 1117.76,334.82 1119.98,337.06 1122.2,339.3 1124.42,341.88 1126.64,344.46 1128.86,347.04 1131.08,349.62 1133.3,352.2" fill="none" stroke="#000" stroke-width="1.2" shape-rendering="crispEdges"/>
<polyline points="1133.3,352.2 1135.4,354.75 1137.5,357.3 1139.6,359.85 1141.7,362.4 1143.74,365.18 1145.78,367.96 1147.82,370.74 1149.86,373.52 1151.9,376.3 1153.93,378.85 1155.95,381.4 1157.97,383.95 1160.0,386.5" fill="none" stroke="#000" stroke-width="1.6" shape-rendering="crispEdges"/>
<polyline points="1160.0,386.5 1162.0,388.48 1164.0,390.45 1166.0,392.42 1168.0,394.4" fill="none" stroke="#000" stroke-width="1.2" shape-rendering="crispEdges"/>
<polyline points="1168.0,394.4 1170.0,397.14 1172.0,399.88 1174.0,402.62 1176.0,405.36 1178.0,408.1" fill="none" stroke="#000" stroke-width="1.6" shape-rendering="crispEdges"/>
<polyline points="1178.0,408.1 1180.06,410.49 1182.12,412.88 1184.18,415.26 1186.24,417.65 1188.29,420.04 1190.35,422.43 1192.41,424.82 1194.47,427.21 1196.53,429.59 1198.59,431.98 1200.65,434.37 1202.71,436.76 1204.76,439.15 1206.82,441.54 1208.88,443.92 1210.94,446.31 1213.0,448.7" fill="none" stroke="#000" stroke-width="1.2" shape-rendering="crispEdges"/>
<polyline points="1213.0,448.7 1215.0,451.41 1217.0,454.13 1219.0,456.84 1221.0,459.56 1223.0,462.27 1225.0,464.99 1227.0,467.7" fill="none" stroke="#000" stroke-width="1.6" shape-rendering="crispEdges"/>
<polyline points="1227.0,467.7 1229.0,470.06 1231.0,472.41 1233.0,474.77 1235.0,477.12 1237.0,479.48 1239.0,481.83 1241.0,484.19 1243.0,486.54" fill="none" stroke="#000" stroke-width="1.2" shape-rendering="crispEdges"/>
<polyline points="1243.0,486.54 1245.0,489.9" fill="none" stroke="#000" stroke-width="1.6" shape-rendering="crispEdges"/>
<polyline points="1245.0,489.9 1247.0,490.48 1249.0,492.06 1251.0,493.64" fill="none" stroke="#000" stroke-width="1.2" shape-rendering="crispEdges"/>
<polyline points="1251.0,493.64 1253.0,496.22" fill="none" stroke="#000" stroke-width="1.6" shape-rendering="crispEdges"/>
<polyline points="1253.0,496.22 1255.0,496.8" fill="none" stroke="#000" stroke-width="1.2" shape-rendering="crispEdges"/>
<polyline points="1255.0,496.8 1257.0,499.38" fill="none" stroke="#000" stroke-width="1.6" shape-rendering="crispEdges"/>
<polyline points="1257.0,499.38 1259.0,500.96 1261.0,501.54 1263.0,503.12 1265.0,504.7 1267.17,506.28 1269.33,508.87 1271.5,510.45 1273.67,511.03 1275.83,512.62 1278,514.2" fill="none" stroke="#000" stroke-width="1.2" shape-rendering="crispEdges"/>
</g>
<clipPath id="pc2"><rect x="4" y="75" width="1274" height="562"/></clipPath><g clip-path="url(#pc2)">
<rect x="4" y="92.5" width="24.9" height="11" fill="#fff" fill-opacity="0.65"/>
<rect x="275.5" y="193.8" width="25.80000000000001" height="11" fill="#fff" fill-opacity="0.65"/>
<rect x="560.5" y="255.3" width="26.0" height="11" fill="#fff" fill-opacity="0.65"/>
<rect x="844.5" y="277.0" width="26.0" height="11" fill="#fff" fill-opacity="0.65"/>
<rect x="1128.7" y="343.1" width="26.0" height="11" fill="#fff" fill-opacity="0.65"/>
<polygon points="3.00,108.00 6.00,108.00 9.00,111.00 9.00,114.00 6.00,117.00 3.00,117.00 0.00,114.00 0.00,111.00" fill="#fff" fill-opacity="0.65" stroke="#0a8ce0" stroke-width="1.1"/>
<polygon points="287.00,208.90 290.00,208.90 293.00,211.90 293.00,214.90 290.00,217.90 287.00,217.90 284.00,214.90 284.00,211.90" fill="#fff" fill-opacity="0.65" stroke="#0a8ce0" stroke-width="1.1"/>
<polygon points="572.00,271.00 575.00,271.00 578.00,274.00 578.00,277.00 575.00,280.00 572.00,280.00 569.00,277.00 569.00,274.00" fill="#fff" fill-opacity="0.65" stroke="#0a8ce0" stroke-width="1.1"/>
<polygon points="856.00,292.80 859.00,292.80 862.00,295.80 862.00,298.80 859.00,301.80 856.00,301.80 853.00,298.80 853.00,295.80" fill="#fff" fill-opacity="0.65" stroke="#0a8ce0" stroke-width="1.1"/>
<polygon points="1140.00,359.10 1143.00,359.10 1146.00,362.10 1146.00,365.10 1143.00,368.10 1140.00,368.10 1137.00,365.10 1137.00,362.10" fill="#fff" fill-opacity="0.65" stroke="#0a8ce0" stroke-width="1.1"/>
<text transform="scale(1.0852,1)" x="4.09 11.69 19.93" y="102.00" font-size="11.4" font-weight="normal" fill="#0a8ce0">SN1</text>
<text transform="scale(1.1287,1)" x="244.45 252.05 260.28" y="203.30" font-size="11.4" font-weight="normal" fill="#0a8ce0">SN2</text>
<text transform="scale(1.1343,1)" x="494.49 502.09 510.33" y="264.80" font-size="11.4" font-weight="normal" fill="#0a8ce0">SN3</text>
<text transform="scale(1.1254,1)" x="750.74 758.34 766.58" y="286.50" font-size="11.4" font-weight="normal" fill="#0a8ce0">SN4</text>
<text transform="scale(1.1331,1)" x="996.45 1004.05 1012.29" y="352.60" font-size="11.4" font-weight="normal" fill="#0a8ce0">SN5</text>
<text transform="scale(1.2000,1)" x="897.64 908.19 917.01 925.74 930.15 934.70 946.11 954.82 958.43 966.38 975.12 979.52 984.04 993.71 1002.44" y="91.60" font-size="15.2" font-weight="normal" fill="#0a8ce0" stroke="#0a8ce0" stroke-width="0.12">Spot Noise [T2]</text>
<text transform="scale(1.2000,1)" x="863.01 871.65 876.07 884.77 893.48 902.12 906.52 914.40 925.66" y="111.70" font-size="15.2" font-weight="normal" fill="#0a8ce0" stroke="#0a8ce0" stroke-width="0.12">1.000 kHz</text>
<text transform="scale(1.2000,1)" x="953.28 958.70 967.60 976.50 985.29 989.85 998.75 1007.54 1012.10 1021.04 1031.65 1039.56 1044.19 1055.66" y="111.70" font-size="15.2" font-weight="normal" fill="#0a8ce0" stroke="#0a8ce0" stroke-width="0.12">-113.96 dBc/Hz</text>
<text transform="scale(1.2000,1)" x="854.18 862.90 871.55 875.98 884.70 893.42 902.08 906.49 914.38 925.66" y="132.60" font-size="15.2" font-weight="normal" fill="#0a8ce0" stroke="#0a8ce0" stroke-width="0.12">10.000 kHz</text>
<text transform="scale(1.2000,1)" x="953.28 958.70 967.60 976.50 985.29 989.85 998.75 1007.54 1012.10 1021.04 1031.65 1039.56 1044.19 1055.66" y="132.60" font-size="15.2" font-weight="normal" fill="#0a8ce0" stroke="#0a8ce0" stroke-width="0.12">-124.73 dBc/Hz</text>
<text transform="scale(1.2000,1)" x="845.26 854.00 862.75 871.42 875.86 884.60 893.35 902.02 906.44 914.36 925.66" y="152.70" font-size="15.2" font-weight="normal" fill="#0a8ce0" stroke="#0a8ce0" stroke-width="0.12">100.000 kHz</text>
<text transform="scale(1.2000,1)" x="953.28 958.70 967.60 976.50 985.29 989.85 998.75 1007.54 1012.10 1021.04 1031.65 1039.56 1044.19 1055.66" y="152.70" font-size="15.2" font-weight="normal" fill="#0a8ce0" stroke="#0a8ce0" stroke-width="0.12">-131.37 dBc/Hz</text>
<text transform="scale(1.1902,1)" x="867.43 875.88 880.10 888.56 897.01 905.47 909.69 922.35 933.33" y="173.50" font-size="15.2" font-weight="normal" fill="#0a8ce0" stroke="#0a8ce0" stroke-width="0.12">1.000 MHz</text>
<text transform="scale(1.2000,1)" x="953.28 958.70 967.60 976.50 985.29 989.85 998.75 1007.54 1012.10 1021.04 1031.65 1039.56 1044.19 1055.66" y="173.50" font-size="15.2" font-weight="normal" fill="#0a8ce0" stroke="#0a8ce0" stroke-width="0.12">-133.70 dBc/Hz</text>
<text transform="scale(1.2000,1)" x="850.76 859.27 867.78 872.04 880.56 889.08 897.58 901.86 914.61 925.66" y="193.70" font-size="15.2" font-weight="normal" fill="#0a8ce0" stroke="#0a8ce0" stroke-width="0.12">10.000 MHz</text>
<text transform="scale(1.2000,1)" x="953.28 958.70 967.60 976.50 985.29 989.85 998.75 1007.54 1012.10 1021.04 1031.65 1039.56 1044.19 1055.66" y="193.70" font-size="15.2" font-weight="normal" fill="#0a8ce0" stroke="#0a8ce0" stroke-width="0.12">-140.82 dBc/Hz</text>
</g>
<rect x="311" y="75" width="1" height="1" fill="#f5a300"/>
<rect x="311" y="636" width="1" height="1" fill="#f5a300"/>
<rect x="1227" y="75" width="1" height="1" fill="#f5a300"/>
<rect x="1227" y="636" width="1" height="1" fill="#f5a300"/>
<rect x="4" y="637" width="1274" height="14" fill="#c8c8c8"/>
<rect x="5" y="638" width="1272" height="12" fill="#14e000"/>
<rect x="140" y="638" width="1" height="12" fill="#c8c8c8"/>
<rect x="288" y="638" width="1" height="12" fill="#c8c8c8"/>
<rect x="424" y="638" width="1" height="12" fill="#c8c8c8"/>
<rect x="573" y="638" width="1" height="12" fill="#c8c8c8"/>
<rect x="708" y="638" width="1" height="12" fill="#c8c8c8"/>
<rect x="857" y="638" width="1" height="12" fill="#c8c8c8"/>
<rect x="993" y="638" width="1" height="12" fill="#c8c8c8"/>
<rect x="1142" y="638" width="1" height="12" fill="#c8c8c8"/>
<text transform="scale(1.1733,1)" x="48.77 55.72 59.20 66.15" y="648.60" font-size="12.5" font-weight="normal" fill="#000">0/10</text>
<text transform="scale(1.1990,1)" x="166.31 173.26 176.74 183.69" y="648.60" font-size="12.5" font-weight="normal" fill="#000">0/10</text>
<text transform="scale(1.2000,1)" x="283.35 290.33 293.83 300.83" y="648.60" font-size="12.5" font-weight="normal" fill="#000">0/40</text>
<text transform="scale(1.1913,1)" x="403.12 410.07 413.54 420.49 427.45" y="648.60" font-size="12.5" font-weight="normal" fill="#000">0/130</text>
<text transform="scale(1.1616,1)" x="535.69 542.64 546.11 553.06 560.01" y="648.60" font-size="12.5" font-weight="normal" fill="#000">0/430</text>
<text transform="scale(1.1542,1)" x="658.94 665.89 669.37 676.32 683.27 690.22" y="648.60" font-size="12.5" font-weight="normal" fill="#000">0/1300</text>
<text transform="scale(1.1658,1)" x="766.95 773.90 780.85 787.80 791.28 798.23 805.18 812.13" y="648.60" font-size="12.5" font-weight="normal" fill="#000">108/1300</text>
<text transform="scale(1.1647,1)" x="890.31 897.26 904.21 911.17 914.64 921.59 928.54 935.49" y="648.60" font-size="12.5" font-weight="normal" fill="#000">331/1300</text>
<text transform="scale(1.1484,1)" x="1023.64 1030.60 1037.55 1044.50 1051.45 1054.92 1061.88 1068.83 1075.78" y="648.60" font-size="12.5" font-weight="normal" fill="#000">1111/1300</text>
<rect x="4" y="651" width="1274" height="18" fill="#000"/>
<text transform="scale(1.1660,1)" x="10.15 19.33 23.91 33.09 37.67 45.92 57.84" y="665.60" font-size="16.5" font-weight="normal" fill="#fff">1.0 kHz</text>
<text transform="scale(1.2000,1)" x="468.15 478.31 483.88 493.15 502.43 511.70 520.97 530.24 538.58 546.89 551.57 564.50 569.13 573.78 582.12 591.37" y="665.70" font-size="16.5" font-weight="normal" fill="#fff">Frequency Offset</text>
<text transform="scale(1.1582,1)" x="1027.59 1036.77 1045.95 1050.53 1059.71 1064.29 1078.04 1089.95" y="665.50" font-size="16.5" font-weight="normal" fill="#fff">30.0 MHz</text>
<rect x="4" y="676" width="1274" height="18" fill="#2d3134"/>
<text transform="scale(1.1549,1)" x="4.75 14.48 19.34 24.21 33.94 38.80 48.53 58.27 64.09 73.83 78.69 88.42 98.15 103.01 117.59 127.33 137.06 145.81 155.54 161.37 171.10 185.68 195.41 205.14 210.01" y="690.75" font-size="17.5" font-weight="normal" fill="#fff">2 Integrated Measurements</text>
<rect x="4" y="694" width="1274" height="60" fill="#000"/>
<rect x="6" y="696" width="1270" height="20" fill="#2e3d4a"/>
<rect x="93" y="696" width="1.5" height="20" fill="#1a2128"/>
<rect x="156" y="696" width="1.5" height="20" fill="#1a2128"/>
<rect x="295" y="696" width="1.5" height="20" fill="#1a2128"/>
<rect x="434" y="696" width="1.5" height="20" fill="#1a2128"/>
<rect x="599" y="696" width="1.5" height="20" fill="#1a2128"/>
<rect x="738" y="696" width="1.5" height="20" fill="#1a2128"/>
<rect x="966" y="696" width="1.5" height="20" fill="#1a2128"/>
<rect x="1093" y="696" width="1.5" height="20" fill="#1a2128"/>
<text transform="scale(1.2000,1)" x="16.40 28.44 37.76 47.08 56.40" y="712.00" font-size="16" font-weight="normal" fill="#fff">Range</text>
<text transform="scale(1.2000,1)" x="83.81 93.82 99.38 108.54 116.81" y="712.00" font-size="16" font-weight="normal" fill="#fff">Trace</text>
<text transform="scale(1.2000,1)" x="144.48 155.81 160.84 170.36 176.11 180.94 186.12 199.30 204.14 209.12 217.86 227.34" y="712.00" font-size="16" font-weight="normal" fill="#fff">Start Offset</text>
<text transform="scale(1.2000,1)" x="262.40 273.37 278.08 287.34 296.50 301.28 314.06 318.69 323.38 331.72 340.88" y="712.00" font-size="16" font-weight="normal" fill="#fff">Stop Offset</text>
<text transform="scale(1.2000,1)" x="394.93 410.36 419.43 423.15 432.30 441.38 445.93 449.66 458.80" y="712.00" font-size="16" font-weight="normal" fill="#fff">Weighting</text>
<text transform="scale(1.2000,1)" x="524.15 529.00 538.30 543.02 547.95 560.12 569.40 573.30 581.81" y="712.00" font-size="16" font-weight="normal" fill="#fff">Int Noise</text>
<text transform="scale(1.1930,1)" x="702.39 713.06" y="712.00" font-size="16" font-weight="normal" fill="#fff">PM</text>
<text transform="scale(1.2000,1)" x="827.44 837.63 851.28 855.89 860.49 865.21 876.32" y="712.00" font-size="16" font-weight="normal" fill="#fff">FM / AM</text>
<text transform="scale(1.2000,1)" x="968.92 977.61 981.64 986.61 991.86 1001.60" y="712.00" font-size="16" font-weight="normal" fill="#fff">Jitter</text>
<text transform="scale(1.0147,1)" x="44.11" y="730.80" font-size="16" font-weight="normal" fill="#fff">1</text>
<text transform="scale(1.2000,1)" x="37.32" y="748.90" font-size="16" font-weight="normal" fill="#fff">2</text>
<text transform="scale(0.9060,1)" x="132.61" y="730.80" font-size="16" font-weight="normal" fill="#fff">1</text>
<text transform="scale(1.1318,1)" x="106.32" y="748.90" font-size="16" font-weight="normal" fill="#fff">2</text>
<text transform="scale(1.1404,1)" x="158.38 167.28 176.18 180.62 189.52 198.42 207.32 211.76 219.76 231.32" y="730.80" font-size="16" font-weight="normal" fill="#fff">12.000 kHz</text>
<text transform="scale(1.1404,1)" x="158.38 167.28 176.18 180.62 189.52 198.42 207.32 211.76 219.76 231.32" y="748.90" font-size="16" font-weight="normal" fill="#fff">12.000 kHz</text>
<text transform="scale(1.1221,1)" x="280.81 289.71 298.61 303.06 311.96 320.85 329.75 334.20 347.53 359.08" y="730.80" font-size="16" font-weight="normal" fill="#fff">20.000 MHz</text>
<text transform="scale(1.1221,1)" x="280.81 289.71 298.61 303.06 311.96 320.85 329.75 334.20 347.53 359.08" y="748.90" font-size="16" font-weight="normal" fill="#fff">20.000 MHz</text>
<text transform="scale(1.1410,1)" x="549.69 555.02 563.92 572.82 577.26 586.16 595.06 599.50 608.40 619.07" y="730.80" font-size="16" font-weight="normal" fill="#fff">-81.24 dBc</text>
<text transform="scale(1.1410,1)" x="549.69 555.02 563.92 572.82 577.26 586.16 595.06 599.50 608.40 619.07" y="748.90" font-size="16" font-weight="normal" fill="#fff">-64.37 dBc</text>
<text transform="scale(1.1829,1)" x="650.11 659.01 663.45 672.35 681.25 685.70 699.03 704.87 709.31 718.21 727.11 736.01 740.45 749.35 758.25 762.70 771.92 777.24 786.14" y="730.80" font-size="16" font-weight="normal" fill="#fff">7.03 mº/122.62 µrad</text>
<text transform="scale(1.1760,1)" x="645.92 654.82 663.71 668.16 677.06 685.96 690.40 703.73 709.57 714.02 722.92 731.82 740.71 745.16 754.06 762.96 767.40 776.62 781.95 790.85" y="748.90" font-size="16" font-weight="normal" fill="#fff">49.02 mº/855.52 µrad</text>
<text transform="scale(1.1344,1)" x="867.48 876.38 885.28 894.18 898.62 907.52 916.42 925.32 929.76 941.32" y="730.80" font-size="16" font-weight="normal" fill="#fff">736.720 Hz</text>
<text transform="scale(1.1358,1)" x="876.11 885.00 889.45 898.35 907.25 916.14 920.59 928.59 940.14" y="748.90" font-size="16" font-weight="normal" fill="#fff">4.862 kHz</text>
<text transform="scale(1.1812,1)" x="976.54 985.44 989.88 998.78 1007.68 1016.58 1021.02 1025.47" y="730.80" font-size="16" font-weight="normal" fill="#fff">6.099 fs</text>
<text transform="scale(1.1559,1)" x="990.18 999.08 1007.97 1012.42 1021.32 1030.22 1039.11 1043.56 1048.01" y="748.90" font-size="16" font-weight="normal" fill="#fff">42.550 fs</text>
</svg>
</body></html>
